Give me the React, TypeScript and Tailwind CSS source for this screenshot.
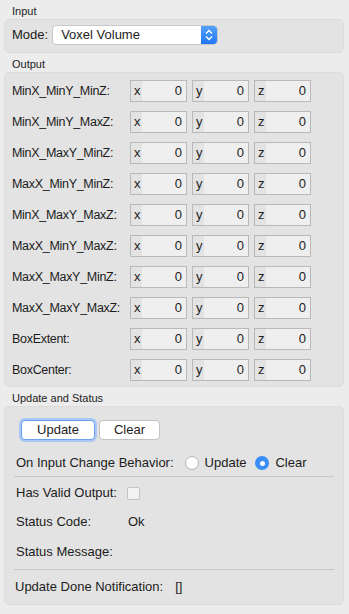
import React from 'react';

const rows = [
  'MinX_MinY_MinZ:',
  'MinX_MinY_MaxZ:',
  'MinX_MaxY_MinZ:',
  'MaxX_MinY_MinZ:',
  'MinX_MaxY_MaxZ:',
  'MaxX_MinY_MaxZ:',
  'MaxX_MaxY_MinZ:',
  'MaxX_MaxY_MaxZ:',
  'BoxExtent:',
  'BoxCenter:',
];

const Field: React.FC<{ axis: string }> = ({ axis }) => (
  <div className="flex h-[22px] w-[57px] border border-[#b9b9b9] bg-[#efefef]">
    <span className="w-[11px] bg-[#e3e3e3] pl-[3px] leading-[20px]">{axis}</span>
    <span className="flex-1 pr-[4px] text-right leading-[20px]">0</span>
  </div>
);

const SectionLabel: React.FC<{ text: string; className?: string }> = ({ text, className }) => (
  <div className={`h-[15px] pl-2 text-[11px] leading-[15px] text-[#222] ${className ?? ''}`}>{text}</div>
);

const App: React.FC = () => {
  return (
    <div className="h-[614px] w-[349px] bg-[#ececec] px-1 pt-1 font-['Liberation_Sans',Arial,sans-serif] text-[13px] text-[#1c1c1c]">
      <SectionLabel text="Input" />
      <div className="flex h-[34px] w-[340px] items-start rounded-[5px] border border-[#dcdcdc] bg-[#e3e3e3] pl-[7px] pt-[5px]">
        <span className="leading-[20px]">Mode:</span>
        <div className="ml-[4px] flex h-[20px] w-[166px] overflow-hidden rounded-[4px] border border-[#c9c9c9] bg-white">
          <span className="flex-1 pl-[8px] leading-[18px]">Voxel Volume</span>
          <div className="flex w-[16px] items-center justify-center rounded-r-[3px] bg-gradient-to-b from-[#55a1f8] to-[#1f75f4]">
            <svg width="8" height="12" viewBox="0 0 8 12" fill="none" stroke="white" strokeWidth="1.4">
              <path d="M1 4.5 L4 1.5 L7 4.5" />
              <path d="M1 7.5 L4 10.5 L7 7.5" />
            </svg>
          </div>
        </div>
      </div>

      <SectionLabel text="Output" className="mt-[4px]" />
      <div className="flex h-[315px] w-[340px] flex-col gap-[9px] rounded-[5px] border border-[#dcdcdc] bg-[#e3e3e3] pl-[7px] pt-[7px]">
        {rows.map((r) => (
          <div key={r} className="flex h-[22px] items-center">
            <span className="w-[118px] text-[12.5px] tracking-[-0.3px]">{r}</span>
            <div className="flex gap-[5px]">
              <Field axis="x" />
              <Field axis="y" />
              <Field axis="z" />
            </div>
          </div>
        ))}
      </div>

      <SectionLabel text="Update and Status" className="mt-[4px]" />
      <div className="h-[199px] w-[340px] rounded-[5px] border border-[#dcdcdc] bg-[#e3e3e3] pl-[10px] pt-[13px]">
        <div className="flex h-[20px] pl-[6px]">
          <button className="h-[20px] w-[74px] rounded-[4px] border border-[#6c9fec] bg-white leading-[18px] shadow-[0_0_0_2px_#a9c8f3]">
            Update
          </button>
          <button className="ml-[4px] h-[20px] w-[61px] rounded-[4px] border border-[#c3c3c3] bg-white leading-[18px]">
            Clear
          </button>
        </div>

        <div className="mt-[13px] flex h-[20px] items-center pl-[1px]">
          <span>On Input Change Behavior:</span>
          <span className="ml-[11px] h-[14px] w-[14px] rounded-full border border-[#b3b3b3] bg-white" />
          <span className="ml-[6px]">Update</span>
          <span className="ml-[9px] flex h-[14px] w-[14px] items-center justify-center rounded-full bg-[#3a8ef6]">
            <span className="h-[5px] w-[5px] rounded-full bg-white" />
          </span>
          <span className="ml-[6px]">Clear</span>
        </div>
        <div className="ml-[-1px] mt-[3px] h-px w-[320px] bg-[#c6c6c6]" />

        <div className="mt-[6px] flex h-[20px] items-center pl-[1px]">
          <span className="w-[111px]">Has Valid Output:</span>
          <span className="h-[13px] w-[13px] rounded-[2px] border border-[#c4c4c4] bg-[#f3f3f3]" />
        </div>
        <div className="mt-[9px] flex h-[20px] items-center pl-[1px]">
          <span className="w-[112px]">Status Code:</span>
          <span>Ok</span>
        </div>
        <div className="mt-[10px] flex h-[20px] items-center pl-[1px]">
          <span>Status Message:</span>
        </div>
        <div className="ml-[-1px] mt-[7px] h-px w-[320px] bg-[#c6c6c6]" />
        <div className="mt-[7px] flex h-[20px] items-center">
          <span>Update Done Notification:</span>
          <span className="ml-[12px]">[]</span>
        </div>
      </div>
    </div>
  );
};

export default App;
